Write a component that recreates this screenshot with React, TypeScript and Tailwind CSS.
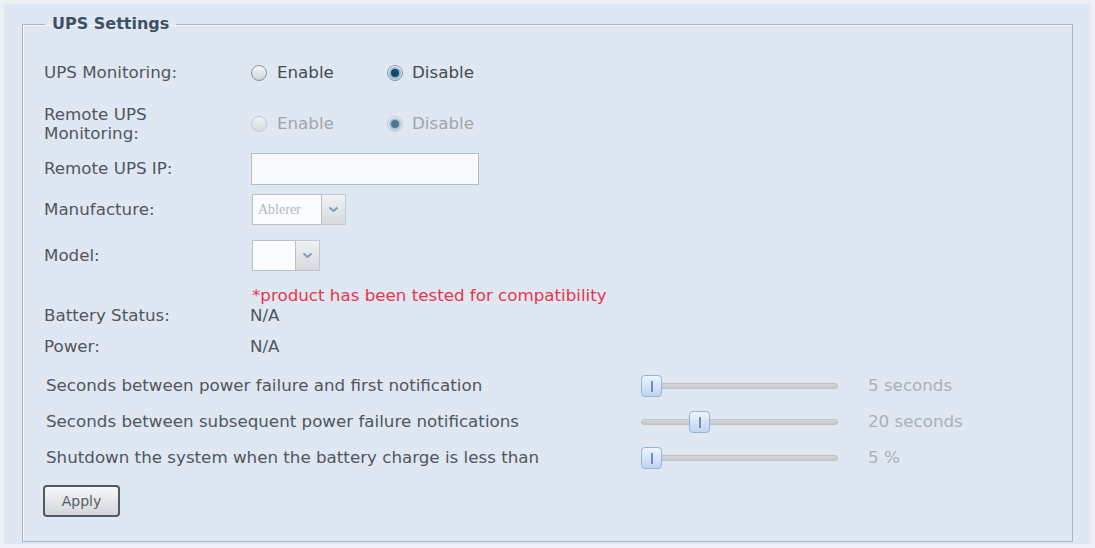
import React from "react";

const font = { fontFamily: '"DejaVu Sans", Verdana, sans-serif' };

const Radio = ({ checked, disabled }: { checked?: boolean; disabled?: boolean }) => (
  <span
    className={`relative inline-flex h-[16px] w-[16px] items-center justify-center rounded-full border bg-gradient-to-b from-[#f7f8f9] to-[#cfd5db] ${
      disabled ? "border-[#b8bfc6] opacity-70" : "border-[#8a949e]"
    }`}
  >
    {checked && (
      <span className="h-[8px] w-[8px] rounded-full bg-[#164865] shadow-[0_0_0_2px_#8db8da]" />
    )}
  </span>
);

const RadioPair = ({ enabled, disabled }: { enabled?: boolean; disabled?: boolean }) => {
  const txt = disabled ? "text-[#9ea5ad]" : "text-[#454b53]";
  return (
    <div className="flex items-center">
      <div className="flex w-[136px] items-center gap-[10px]">
        <Radio checked={enabled} disabled={disabled} />
        <span className={txt}>Enable</span>
      </div>
      <div className="flex items-center gap-[9px]">
        <Radio checked={!enabled} disabled={disabled} />
        <span className={txt}>Disable</span>
      </div>
    </div>
  );
};

const Chevron = () => (
  <svg width="11" height="7" viewBox="0 0 11 7">
    <path d="M1.5 1.5 L5.5 5 L9.5 1.5" fill="none" stroke="#7f9ab8" strokeWidth="2" />
  </svg>
);

const Select = ({ width, text }: { width: number; text?: string }) => (
  <div className="flex h-[31px]">
    <div
      className="flex items-center border border-[#b9c0c7] bg-[#fbfcfd] px-[5px] text-[14px] text-[#b4b8bd]"
      style={{ width, fontFamily: '"Liberation Serif", serif' }}
    >
      {text}
    </div>
    <div className="flex w-[24px] items-center justify-center border border-l-0 border-[#c2c8ce] bg-gradient-to-b from-[#f0f2f4] to-[#d6dade]">
      <Chevron />
    </div>
  </div>
);

const Slider = ({ pos }: { pos: number }) => (
  <div className="relative flex h-[22px] w-[197px] items-center">
    <div className="h-[6px] w-full rounded-full border border-[#bfc3c8] bg-gradient-to-b from-[#d6d8db] to-[#c4c7cb]" />
    <div
      className="absolute top-0 flex h-[22px] w-[21px] items-center justify-center rounded-[4px] border border-[#94b3d8] bg-gradient-to-b from-[#eef4fc] to-[#bfd5f0]"
      style={{ left: pos }}
    >
      <span className="h-[11px] w-[2px] bg-[#6f8fb8]" />
    </div>
  </div>
);

const sliders = [
  { label: "Seconds between power failure and first notification", pos: 0, value: "5 seconds" },
  { label: "Seconds between subsequent power failure notifications", pos: 48, value: "20 seconds" },
  { label: "Shutdown the system when the battery charge is less than", pos: 0, value: "5 %" },
];

export default function App() {
  return (
    <div className="min-h-[548px] bg-[#edf1f6] p-[4px] text-[16.7px] text-[#50565e]" style={font}>
      <div className="h-[540px] bg-[#dfe7f2] px-[18px] pt-[10px]">
        <fieldset className="h-[528px] border border-[#aab5c1] shadow-[inset_1px_1px_0_#f3f6fa]">
          <legend className="ml-[22px] px-[7px] text-[16px] font-bold leading-[20px] text-[#3d5166]">
            UPS Settings
          </legend>

          <div className="pl-[21px] pt-[24px]">
            <div className="flex h-[30px] items-center">
              <div className="w-[207px]">UPS Monitoring:</div>
              <RadioPair />
            </div>

            <div className="mt-[17px] flex h-[38px] items-center">
              <div className="w-[207px] leading-[19px]">
                Remote UPS
                <br />
                Monitoring:
              </div>
              <RadioPair disabled />
            </div>

            <div className="mt-[10px] flex h-[32px] items-center">
              <div className="w-[207px]">Remote UPS IP:</div>
              <div className="h-[32px] w-[228px] border border-[#b3bbc4] bg-[#f8fafc]" />
            </div>

            <div className="mt-[9px] flex h-[31px] items-center">
              <div className="w-[208px]">Manufacture:</div>
              <Select width={70} text="Ablerer" />
            </div>

            <div className="mt-[15px] flex h-[31px] items-center">
              <div className="w-[208px]">Model:</div>
              <Select width={44} />
            </div>

            <div className="mt-[15px] flex h-[20px] items-center">
              <div className="w-[208px]" />
              <span className="text-[#e8364a]">*product has been tested for compatibility</span>
            </div>

            <div className="flex h-[20px] items-center">
              <div className="w-[206px]">Battery Status:</div>
              <span>N/A</span>
            </div>

            <div className="mt-[11px] flex h-[20px] items-center">
              <div className="w-[206px]">Power:</div>
              <span>N/A</span>
            </div>

            <div className="mt-[18px] flex flex-col gap-[14px] pl-[2px]">
              {sliders.map((s) => (
                <div key={s.label} className="flex h-[22px] items-center">
                  <div className="w-[595px]">{s.label}</div>
                  <Slider pos={s.pos} />
                  <span className="ml-[30px] text-[#a9b0b8]">{s.value}</span>
                </div>
              ))}
            </div>

            <button className="ml-[-1px] mt-[16px] h-[32px] w-[77px] rounded-[4px] border-2 border-[#505a64] bg-gradient-to-b from-[#f6f7f8] to-[#d2d6db] text-[14px] text-[#565d65]">
              Apply
            </button>
          </div>
        </fieldset>
      </div>
    </div>
  );
}
